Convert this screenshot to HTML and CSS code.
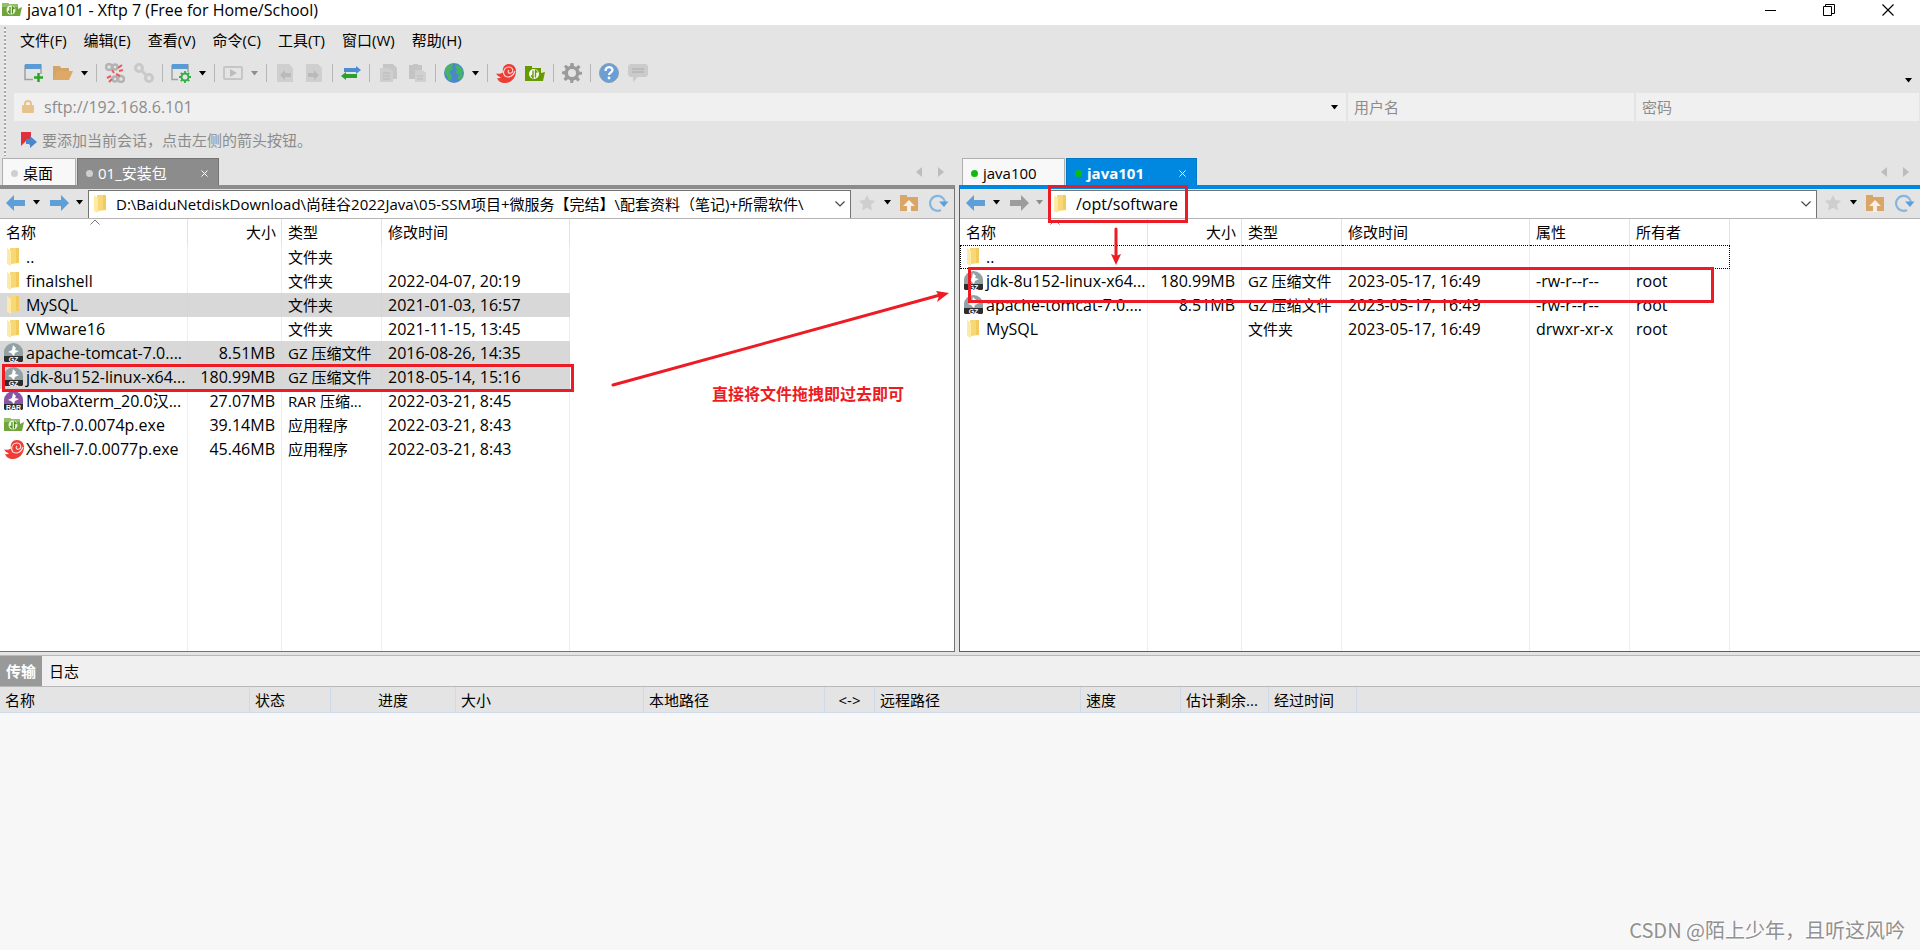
FILE: index.html
```html
<!DOCTYPE html>
<html lang="zh-CN">
<head>
<meta charset="utf-8">
<title>java101 - Xftp 7 (Free for Home/School)</title>
<link rel="stylesheet" href="styles.css">
</head>
<body>
<svg class="sprite" aria-hidden="true">
  <symbol id="xftp" viewBox="0 0 20 20"><path d="M0 3h6l1 1h9v5l4-2-2 9H0z" fill="#6fa53c"/><path d="M0 3h6l1 1h9v3H0z" fill="#93bf68"/><circle cx="9" cy="10" r="4.500" fill="#eef7e4"/><path d="M8 7v6l-2-2M10.500 13.500V7l2 2" stroke="#4d8f1c" stroke-width="1.300" fill="none"/></symbol>
  <symbol id="xftp-flat" viewBox="0 0 20 20"><path d="M0 3h7v2h9v5l4-1-2 9H0z" fill="#659a00"/><circle cx="9" cy="11" r="5" fill="#fff"/><path d="M8 7.500v7l-2-2M10.500 14.500v-7l2 2" stroke="#659a00" stroke-width="1.400" fill="none"/></symbol>
  <symbol id="xshell" viewBox="0 0 20 20"><path d="M0 10.500c2 .5 5 .5 7-1C6 4 9 1 13 1c4 0 7 3 7 7 0 7-5 12-11 12-4 0-7-2-8-5 2 .5 3 0 4-.5-2-1-4-2-5-4z" fill="#ee3d36"/><path d="M19 8c-2 6-7 7-10 5-3-3-1-9 4-9 4 0 5 5 2 6-2 1-4-1-2-3" fill="none" stroke="#fff" stroke-width="1.100" opacity=".8"/></symbol>
  <symbol id="folder" viewBox="0 0 12 18"><path d="M3 0h9v15l-8 1z" fill="#f8d775"/><path d="M9 0h3v15h-3z" fill="#f3ca60"/><path d="M0 0l4 3v15l-4-2z" fill="#ffe9a6"/></symbol>
  <symbol id="gz" viewBox="0 0 20 20"><path d="M0 14V9a9.500 9 0 0 1 19 0v5z" fill="#92a1a3"/><path d="M9 2l3 3-1 2 4 1-4 2-1 3-3-3-3-1 4-2z" fill="#fff"/><path d="M0 13h19v5l-1 1H1l-1-1z" fill="#2d2d2d"/><text x="9.500" y="18.500" class="badge">GZ</text></symbol>
  <symbol id="rar" viewBox="0 0 20 20"><path d="M0 14V9a9.500 9 0 0 1 19 0v5z" fill="#8b55a5"/><path d="M9 2l3 3-1 2 4 1-4 2-1 3-3-3-3-1 4-2z" fill="#fff"/><path d="M0 13h19v5l-1 1H1l-1-1z" fill="#2d2d2d"/><text x="9.500" y="18.500" class="badge">RAR</text></symbol>
  <symbol id="tri" viewBox="0 0 8 5"><path d="M0 0h7L3.500 4.500z" fill="currentColor"/></symbol>
  <symbol id="back" viewBox="0 0 20 16"><path d="M0 8l8-8v5h11v6H8v5z" fill="currentColor"/></symbol>
  <symbol id="fwd" viewBox="0 0 20 16"><path d="M20 8l-8-8v5H1v6h11v5z" fill="currentColor"/></symbol>
  <symbol id="star" viewBox="0 0 16 16"><path d="M8 0l2.500 5 5.500.8-4 4 1 5.700-5-2.700-5 2.700 1-5.700-4-4 5.500-.8z" fill="#cecece"/></symbol>
  <symbol id="up" viewBox="0 0 18 18"><path d="M0 1h7v2h11v14H0z" fill="#d9a668"/><path d="M9 6l6 6h-4v6H7v-6H3z" fill="#f6efe6"/></symbol>
  <symbol id="refresh" viewBox="0 0 20 18"><path d="M12 16a7.500 7.500 0 1 1 4-8" fill="none" stroke="#84b6e2" stroke-width="2.200"/><path d="M10 7.500h9.500L15 13z" fill="#5e9fd8"/></symbol>
  <symbol id="down" viewBox="0 0 10 6"><path d="M.5.5L5 5 9.500.5" fill="none" stroke="#444" stroke-width="1.200"/></symbol>
  <symbol id="sl" viewBox="0 0 6 10"><path d="M6 0v10L0 5z" fill="#bdbdbd"/></symbol>
  <symbol id="sr" viewBox="0 0 6 10"><path d="M0 0v10l6-5z" fill="#bdbdbd"/></symbol>
  <symbol id="x" viewBox="0 0 7 7"><path d="M.5.5l6 6M6.500.5l-6 6" stroke="#fff" fill="none"/></symbol>
  <symbol id="gear" viewBox="0 0 20 20"><path fill-rule="evenodd" d="M8.500 0h3l.5 3 2 1 2.500-2L18.500 4l-2 2.500 1 2 2.500.5v2.500l-3 .5-.8 2 1.800 2.500-2 2-2.500-1.800-2 .8-.5 3H8.500L8 17l-2-.8L3.500 18l-2-2 1.800-2.500-.8-2-2.500-.5V8.500L2.800 8l.9-2L2 3.500 4 1.800 6.300 3.500 8 3zM10 6a4 4 0 1 0 0 8 4 4 0 0 0 0-8z" fill="currentColor"/></symbol>
</svg>

<header class="titlebar">
  <svg class="i20"><use href="#xftp"/></svg>
  <h1>java101 - Xftp 7 (Free for Home/School)</h1>
  <div class="winbtns">
    <button aria-label="最小化"><svg width="12" height="14"><path d="M1 7.500h11" stroke="#000"/></svg></button>
    <button aria-label="还原"><svg width="12" height="14"><path d="M.5 3.500h8v9h-8zM2.500 3V1.500h9v9H9" fill="none" stroke="#000"/></svg></button>
    <button aria-label="关闭"><svg width="12" height="14"><path d="M.5 1.500l11 11M11.500 1.500l-11 11" stroke="#000" stroke-width="1.200"/></svg></button>
  </div>
</header>

<div class="chrome">
  <nav class="menu">
    <button>文件(F)</button><button>编辑(E)</button><button>查看(V)</button><button>命令(C)</button><button>工具(T)</button><button>窗口(W)</button><button>帮助(H)</button>
  </nav>
  <div class="toolbar">
    <button aria-label="新建"><svg class="i20" viewBox="0 0 20 20"><path d="M1 2h16v9M9 16.500H1V2" fill="none" stroke="#a0a0a0" stroke-width="1.500"/><path d="M1 1h16v5H1z" fill="#5b9bd5"/><path d="M14.500 10v9M10 14.500h9" stroke="#2aa52a" stroke-width="2.500"/></svg></button>
    <button aria-label="打开"><svg class="i20" viewBox="0 0 20 20"><path d="M0 3h7l1 2h8v4H6L1 17H0z" fill="#d5a468"/><path d="M5 8h15l-4 9H0z" fill="#dda965"/></svg></button>
    <button class="dd" aria-label="打开选项"><svg class="tri"><use href="#tri"/></svg></button><i class="sep"></i>
    <button aria-label="断开"><svg class="i20" viewBox="0 0 20 20"><g fill="none" stroke="#b3b3b3" stroke-width="2.500"><circle cx="4" cy="4" r="3"/><circle cx="10" cy="4" r="2.500"/><circle cx="10" cy="16" r="2.500"/><circle cx="16" cy="16" r="3"/></g><path d="M7 7l2 3M11 11l4 2M13 5l4-3M14 8l4-1M2 15l4-2M4 19l3-3" stroke="#ea5a60" stroke-width="2"/></svg></button>
    <button aria-label="重新连接"><svg class="i20" viewBox="0 0 20 20"><g fill="none" stroke="#c9c9c9" stroke-width="3"><circle cx="5" cy="5" r="3.500"/><circle cx="15" cy="15" r="3.500"/><path d="M7 7l6 6"/></g></svg></button><i class="sep"></i>
    <button aria-label="属性"><svg class="i20" viewBox="0 0 20 20"><path d="M1 2h16v7M7 16.500H1V2" fill="none" stroke="#a0a0a0" stroke-width="1.500"/><path d="M1 1h16v5H1z" fill="#5b9bd5"/><g stroke="#35ad45" fill="none"><circle cx="14" cy="14" r="3.500" stroke-width="2"/><path d="M14 8v2M14 18v2M8 14h2M18 14h2M9.800 9.800l1.500 1.500M16.700 16.700l1.500 1.500M9.800 18.200l1.500-1.500M16.700 11.300l1.500-1.500" stroke-width="1.800"/></g></svg></button>
    <button class="dd" aria-label="属性选项"><svg class="tri"><use href="#tri"/></svg></button><i class="sep"></i>
    <button aria-label="运行"><svg class="i20" viewBox="0 0 20 20"><rect x="1" y="4" width="18" height="12" rx="1" fill="none" stroke="#c6c6c6" stroke-width="2"/><path d="M7 6l7 4-7 4z" fill="#bcbcbc"/></svg></button>
    <button class="dd off" aria-label="运行选项"><svg class="tri"><use href="#tri"/></svg></button><i class="sep"></i>
    <button aria-label="下载"><svg class="i20" viewBox="0 0 20 20"><path d="M2 1h12l4 4v14H2z" fill="#cfcfcf"/><path d="M5 12l5-5v3h6v4h-6v3z" fill="#bababa"/></svg></button>
    <button aria-label="上传"><svg class="i20" viewBox="0 0 20 20"><path d="M2 1h12l4 4v14H2z" fill="#cfcfcf"/><path d="M15 12l-5-5v3H4v4h6v3z" fill="#bababa"/></svg></button><i class="sep"></i>
    <button aria-label="同步"><svg class="i20" viewBox="0 0 20 20"><path d="M20 7l-5-4v2H3v4h12v2z" fill="#4a8bd2"/><path d="M0 13l5-4v2h11v4H5v2z" fill="#2ca02c"/></svg></button><i class="sep"></i>
    <button aria-label="复制"><svg class="i20" viewBox="0 0 20 20"><path d="M5 1h10l4 4v11H5z" fill="#c6c6c6"/><path d="M2 5h9l4 3v11H2z" fill="#cecece"/><path d="M5 10h7M5 13h7M5 16h7" stroke="#b9b9b9"/></svg></button>
    <button aria-label="粘贴"><svg class="i20" viewBox="0 0 20 20"><path d="M2 2h4V1h5v1h4v14H2z" fill="#c4c4c4"/><path d="M8 7h7l4 3v9H8z" fill="#d0d0d0"/><path d="M10 13h6M10 16h6" stroke="#bdbdbd"/></svg></button><i class="sep"></i>
    <button aria-label="语言"><svg class="i20" viewBox="0 0 20 20"><circle cx="10" cy="10" r="10" fill="#4b88cb"/><path d="M1 6c2-4 5-5 8-5l-1 3 1 2-3 2v3l2 2-1 4-2 1-2-5-2-3zM12 2c4 0 6 3 7 6l-1 2 1 3-3 4-2-1 1-4-3-2 1-4-2-2z" fill="#45b562"/></svg></button>
    <button class="dd" aria-label="语言选项"><svg class="tri"><use href="#tri"/></svg></button><i class="sep"></i>
    <button aria-label="Xshell"><svg class="i20"><use href="#xshell"/></svg></button>
    <button aria-label="Xftp"><svg class="i20"><use href="#xftp-flat"/></svg></button><i class="sep"></i>
    <button class="gray" aria-label="设置"><svg class="i20"><use href="#gear"/></svg></button><i class="sep"></i>
    <button aria-label="帮助"><svg class="i20" viewBox="0 0 20 20"><circle cx="10" cy="10" r="9.500" fill="#6a9fd6" stroke="#8a9fb5"/><path d="M6.500 8c0-5 7-5 7-1 0 2.500-3.500 2.500-3.500 5" fill="none" stroke="#fff" stroke-width="2.200"/><circle cx="10" cy="15" r="1.400" fill="#fff"/></svg></button>
    <button aria-label="反馈"><svg class="i20" viewBox="0 0 20 20"><path d="M2 1h16l2 2v9l-2 2h-8l-5 5v-5H2l-2-2V3z" fill="#cbcbcb"/><path d="M4 6h12M4 9h12" stroke="#b5b5b5" stroke-width="1.300"/></svg></button>
    <button class="dd more" aria-label="更多"><svg class="tri"><use href="#tri"/></svg></button>
  </div>
  <div class="session">
    <div class="field host"><svg width="12" height="14"><path d="M3 6V4a3 3 0 0 1 6 0v2" fill="none" stroke="#e8c28c" stroke-width="2"/><rect y="5" width="12" height="8" rx="1" fill="#e8c28c"/></svg><input aria-label="主机" value="sftp://192.168.6.101"><button class="dd" aria-label="主机列表"><svg class="tri"><use href="#tri"/></svg></button></div>
    <div class="field"><input aria-label="用户名" placeholder="用户名"></div>
    <div class="field"><input aria-label="密码" type="password" placeholder="密码"></div>
  </div>
  <div class="hint"><svg width="16" height="17"><path d="M0 1h10v14l-5-5-5 5z" fill="#e0303c"/><path d="M5 8h4V5l7 6-7 6v-4H5z" fill="#4a88cc"/></svg><span>要添加当前会话，点击左侧的箭头按钮。</span></div>
</div>

<main class="panes">
  <section class="pane local">
    <div class="tabs">
      <button class="tab"><i class="dot"></i>桌面</button>
      <button class="tab active"><i class="dot"></i>01_安装包<svg class="x"><use href="#x"/></svg></button>
      <button class="scroll" aria-label="向左"><svg><use href="#sl"/></svg></button><button class="scroll" aria-label="向右"><svg><use href="#sr"/></svg></button>
    </div>
    <div class="body">
      <div class="path">
        <button class="nav" aria-label="后退"><svg class="arr"><use href="#back"/></svg></button><button class="ndd" aria-label="后退历史"><svg class="tri"><use href="#tri"/></svg></button>
        <button class="nav second" aria-label="前进"><svg class="arr"><use href="#fwd"/></svg></button><button class="ndd" aria-label="前进历史"><svg class="tri"><use href="#tri"/></svg></button>
        <div class="combo"><svg class="fold"><use href="#folder"/></svg><input aria-label="本地路径" value="D:\BaiduNetdiskDownload\尚硅谷2022Java\05-SSM项目+微服务【完结】\配套资料（笔记)+所需软件\"><button aria-label="展开"><svg width="10" height="6"><use href="#down"/></svg></button></div>
        <button class="nav" aria-label="收藏"><svg width="16" height="16"><use href="#star"/></svg></button><button class="ndd" aria-label="收藏列表"><svg class="tri"><use href="#tri"/></svg></button><button class="nav" aria-label="上级"><svg width="18" height="18"><use href="#up"/></svg></button><button class="nav" aria-label="刷新"><svg width="20" height="18"><use href="#refresh"/></svg></button>
      </div>
      <div class="list">
        <table>
          <colgroup><col class="c-name"><col class="c-size"><col class="c-type"><col class="c-date"><col></colgroup>
          <thead><tr><th>名称<svg class="sort" width="10" height="6"><path d="M.5 5.500L5 1l4.500 4.500" fill="none" stroke="#777"/></svg></th><th class="num">大小</th><th>类型</th><th>修改时间</th><th></th></tr></thead>
          <tbody>
            <tr><td><svg class="fold"><use href="#folder"/></svg>..</td><td></td><td>文件夹</td><td></td><td></td></tr>
            <tr><td><svg class="fold"><use href="#folder"/></svg>finalshell</td><td></td><td>文件夹</td><td class="date">2022-04-07, 20:19</td><td></td></tr>
            <tr class="sel"><td><svg class="fold"><use href="#folder"/></svg>MySQL</td><td></td><td>文件夹</td><td class="date">2021-01-03, 16:57</td><td></td></tr>
            <tr><td><svg class="fold"><use href="#folder"/></svg>VMware16</td><td></td><td>文件夹</td><td class="date">2021-11-15, 13:45</td><td></td></tr>
            <tr class="sel"><td><svg class="file"><use href="#gz"/></svg>apache-tomcat-7.0....</td><td class="num">8.51MB</td><td>GZ 压缩文件</td><td class="date">2016-08-26, 14:35</td><td></td></tr>
            <tr class="sel"><td><svg class="file"><use href="#gz"/></svg>jdk-8u152-linux-x64...</td><td class="num">180.99MB</td><td>GZ 压缩文件</td><td class="date">2018-05-14, 15:16</td><td></td></tr>
            <tr><td><svg class="file"><use href="#rar"/></svg>MobaXterm_20.0汉...</td><td class="num">27.07MB</td><td>RAR 压缩...</td><td class="date">2022-03-21, 8:45</td><td></td></tr>
            <tr><td><svg class="file"><use href="#xftp"/></svg>Xftp-7.0.0074p.exe</td><td class="num">39.14MB</td><td>应用程序</td><td class="date">2022-03-21, 8:43</td><td></td></tr>
            <tr><td><svg class="file"><use href="#xshell"/></svg>Xshell-7.0.0077p.exe</td><td class="num">45.46MB</td><td>应用程序</td><td class="date">2022-03-21, 8:43</td><td></td></tr>
            <tr class="fill"><td></td><td></td><td></td><td></td><td></td></tr>
          </tbody>
        </table>
      </div>
    </div>
  </section>

  <section class="pane remote">
    <div class="tabs">
      <button class="tab"><i class="dot"></i>java100</button>
      <button class="tab active"><i class="dot"></i>java101<svg class="x"><use href="#x"/></svg></button>
      <button class="scroll" aria-label="向左"><svg><use href="#sl"/></svg></button><button class="scroll" aria-label="向右"><svg><use href="#sr"/></svg></button>
    </div>
    <div class="body">
      <div class="path">
        <button class="nav" aria-label="后退"><svg class="arr"><use href="#back"/></svg></button><button class="ndd" aria-label="后退历史"><svg class="tri"><use href="#tri"/></svg></button>
        <button class="nav second off" aria-label="前进"><svg class="arr"><use href="#fwd"/></svg></button><button class="ndd off" aria-label="前进历史"><svg class="tri"><use href="#tri"/></svg></button>
        <div class="combo"><svg class="fold"><use href="#folder"/></svg><input aria-label="远程路径" value="/opt/software"><button aria-label="展开"><svg width="10" height="6"><use href="#down"/></svg></button></div>
        <button class="nav" aria-label="收藏"><svg width="16" height="16"><use href="#star"/></svg></button><button class="ndd" aria-label="收藏列表"><svg class="tri"><use href="#tri"/></svg></button><button class="nav" aria-label="上级"><svg width="18" height="18"><use href="#up"/></svg></button><button class="nav" aria-label="刷新"><svg width="20" height="18"><use href="#refresh"/></svg></button>
      </div>
      <div class="list">
        <table>
          <colgroup><col class="c-name"><col class="c-size"><col class="c-type"><col class="c-date"><col class="c-attr"><col class="c-attr"><col></colgroup>
          <thead><tr><th>名称<svg class="sort" width="10" height="6"><path d="M.5 5.500L5 1l4.500 4.500" fill="none" stroke="#777"/></svg></th><th class="num">大小</th><th>类型</th><th>修改时间</th><th>属性</th><th>所有者</th><th></th></tr></thead>
          <tbody>
            <tr class="focus"><td><svg class="fold"><use href="#folder"/></svg>..</td><td></td><td></td><td></td><td></td><td></td><td></td></tr>
            <tr><td><svg class="file"><use href="#gz"/></svg>jdk-8u152-linux-x64...</td><td class="num">180.99MB</td><td>GZ 压缩文件</td><td class="date">2023-05-17, 16:49</td><td class="date">-rw-r--r--</td><td class="date">root</td><td></td></tr>
            <tr><td><svg class="file"><use href="#gz"/></svg>apache-tomcat-7.0....</td><td class="num">8.51MB</td><td>GZ 压缩文件</td><td class="date">2023-05-17, 16:49</td><td class="date">-rw-r--r--</td><td class="date">root</td><td></td></tr>
            <tr><td><svg class="fold"><use href="#folder"/></svg>MySQL</td><td></td><td>文件夹</td><td class="date">2023-05-17, 16:49</td><td class="date">drwxr-xr-x</td><td class="date">root</td><td></td></tr>
            <tr class="fill"><td></td><td></td><td></td><td></td><td></td><td></td><td></td></tr>
          </tbody>
        </table>
      </div>
    </div>
  </section>
</main>

<section class="transfer">
  <div class="ttabs"><button class="on">传输</button><button>日志</button></div>
  <table>
    <colgroup><col class="t1"><col class="t2"><col class="t3"><col class="t4"><col class="t5"><col class="t6"><col class="t7"><col class="t8"><col class="t9"><col class="t9"><col></colgroup>
    <thead><tr><th>名称</th><th>状态</th><th class="mid">进度</th><th>大小</th><th>本地路径</th><th class="mid">&lt;-&gt;</th><th>远程路径</th><th>速度</th><th>估计剩余...</th><th>经过时间</th><th></th></tr></thead>
  </table>
</section>

<div class="mark box-local"></div>
<div class="mark box-path"></div>
<div class="mark box-remote"></div>
<svg class="drag" width="340" height="100"><path d="M4 95L331 5" stroke="#ed1c24" stroke-width="3" stroke-linecap="round"/><path d="M340 3l-12 9 2-6-3-5z" fill="#ed1c24"/></svg>
<svg class="point" width="12" height="38"><path d="M6 2v28" stroke="#ed1c24" stroke-width="3" stroke-linecap="round"/><path d="M6 38L1 27l5 2 5-2z" fill="#ed1c24"/></svg>
<p class="note">直接将文件拖拽即过去即可</p>
<p class="watermark">CSDN @陌上少年<span class="comma">，</span>且听这风吟</p>
</body>
</html>
```

FILE: styles.css
```css
* { box-sizing: border-box; }
body {
  margin: 0;
  min-height: 100vh;
  display: flex;
  flex-direction: column;
  position: relative;
  background: #e4e4e4;
  color: #000;
  font: 15px/20px "Open Sans", "Noto Sans CJK SC", sans-serif;
}
button, input { font: inherit; color: inherit; border: 0; padding: 0; margin: 0; background: none; min-width: 0; outline: 0; }
button { display: flex; align-items: center; justify-content: center; white-space: nowrap; }
svg { display: block; flex: none; }
h1, p { margin: 0; font-weight: 400; font-size: 16px; }
.sprite { display: none; }
.badge { font: bold 7px "Liberation Sans", sans-serif; fill: #fff; text-anchor: middle; }
.i20 { width: 20px; height: 20px; }
.tri { width: 8px; height: 5px; }
.off { color: #8c8c8c; }
.gray { color: #9b9b9b; }

.titlebar { height: 25px; background: #fff; display: flex; align-items: center; padding: 0 3px 5px 2px; gap: 5px; }
.winbtns { margin-left: auto; display: flex; }
.winbtns button { width: 59px; height: 20px; }

.chrome { height: 133px; padding-left: 14px; display: flex; flex-direction: column; position: relative; }
.chrome::before {
  content: ""; position: absolute; left: 4px; top: 2px; bottom: 2px; width: 2px;
  background: repeating-linear-gradient(#a5a5a5 0 2px, #f4f4f4 2px 4px);
}
.menu { display: flex; gap: 17px; height: 32px; padding: 0 0 2px 6px; }
.toolbar { display: flex; align-items: center; height: 36px; padding: 0 4px 4px 5px; }
.toolbar button { width: 29px; height: 24px; }
.toolbar button.dd, .host button.dd { width: 15px; }
.sep { width: 8px; height: 18px; background: linear-gradient(#b5b5b5, #b5b5b5) center / 1px 100% no-repeat; }
.toolbar .more { margin-left: auto; width: 8px; align-self: flex-end; height: 18px; }
.session { display: grid; grid-template-columns: 1332fr 286fr 283fr; gap: 2px; height: 28px; padding-right: 1px; color: #8c8c8c; }
.field { background: #f0f0f0; display: flex; align-items: center; padding-left: 6px; }
.field input { flex: 1; }
.field input::placeholder { color: #8c8c8c; }
.host { padding: 0 4px 0 8px; gap: 10px; font-size: 16px; }
.host button { color: #000; }
.hint { display: flex; align-items: center; gap: 5px; height: 37px; padding: 0 0 0 7px; color: #8c8c8c; }

.panes { flex: 495 1 0; display: grid; grid-template-columns: 955fr 961fr; gap: 4px; min-height: 0; }
.pane { display: flex; flex-direction: column; min-height: 0; min-width: 0; }
.local { --accent: #8c8c8c; --edge: #747474; --dot: #cfcfcf; }
.remote { --accent: #0087e0; --edge: #0078c6; --dot: #0dbb0d; }
.tabs { display: flex; height: 27px; padding-left: 2px; gap: 1px; }
.tab { justify-content: flex-start; gap: 4px; padding: 2px 16px 0 8px; background: #f8f8f8; border: 1px solid #b0b0b0; border-bottom: 0; min-width: 74px; }
.remote .tab { min-width: 103px; }
.tab.active { background: var(--accent); color: #fff; border-color: var(--edge); width: 142px; }
.remote .tab.active { width: 131px; font-weight: 700; }
.remote .tabs { padding-left: 3px; }
.dot { width: 7px; height: 7px; border-radius: 50%; background: var(--dot); margin-right: 1px; }
.x { width: 7px; height: 7px; margin-left: auto; margin-right: -6px; }
.scroll { width: 21px; }
.scroll svg { width: 6px; height: 10px; }
.tab + .scroll { margin-left: auto; }
.scroll:last-child { margin-right: 4px; }
.body { flex: 1; display: flex; flex-direction: column; min-height: 0; border-top: 4px solid var(--accent); border-bottom: 1px solid var(--edge); }
.local .body { border-right: 1px solid var(--edge); }
.remote .body { border-left: 1px solid var(--edge); }
.path { display: flex; height: 30px; padding-top: 1px; border-bottom: 1px solid #b4b4b4; }
.nav { width: 31px; color: #5e9fd8; padding-bottom: 3px; }
.nav.second { margin-left: 1px; }
.nav:last-child { width: 30px; }
.nav.off { color: #9d9d9d; }
.arr { width: 20px; height: 16px; }
.ndd { width: 11px; padding-bottom: 3px; }
.combo { flex: 1; min-width: 0; display: flex; align-items: center; background: #fff; border: 1px solid #747474; border-bottom: 0; margin-left: 3px; padding: 0 0 1px 5px; gap: 10px; }
.combo input { flex: 1; text-overflow: clip; }
.remote .combo { font-size: 16px; }
.combo button { width: 16px; height: 100%; margin-right: 2px; margin-left: -8px; }
.fold { width: 12px; height: 18px; }
.list { flex: 1; min-height: 0; background: #fff; }
table { border-collapse: separate; border-spacing: 0; table-layout: fixed; width: 100%; }
.list table { height: 100%; }
th, td { font-weight: 400; text-align: left; padding: 0 0 0 6px; white-space: nowrap; overflow: hidden; }
th { height: 26px; border-right: 1px solid #e3e3e3; position: relative; }
td { height: 24px; border-right: 1px solid #e6f0fa; }
.list th:last-child, .list td:last-child { border-right: 0; }
.list .fill td { height: auto; }
.list td:first-child, .list td.num, .list td.date { font-size: 16px; }
.num { text-align: right; padding-right: 6px; }
th.num { padding-right: 5px; }
.sel td { background: #d8d8d8; border-right-color: #ccd7e2; }
.sel td:last-child { background: none; }
td svg { display: inline-block; vertical-align: top; }
td .fold { margin: 1px 7px 0 1px; }
td .file { width: 20px; height: 20px; margin: 0 2px 0 -2px; }
.sort { position: absolute; left: 90px; top: 0; }
.focus td { border-top: 1px dotted #000; border-bottom: 1px dotted #000; }
.focus td:first-child { border-left: 1px dotted #000; padding-left: 5px; }
.focus td:nth-last-child(2) { border-right: 1px dotted #000; }
.focus td:last-child { border: 0; }
.c-name, .c-date { width: 188px; }
.c-size { width: 94px; }
.c-type, .c-attr { width: 100px; }

.transfer { flex: 294 1 0; margin-top: 3px; border-top: 1px solid #b8b8b8; background: #f7f7f7; }
.ttabs { display: flex; height: 31px; background: #f0f0f0; border-bottom: 1px solid #b8b8b8; }
.ttabs button { padding: 0 7px; }
.ttabs .on { background: #999; color: #fff; font-weight: 700; padding: 0 6px; }
.transfer th { background: #e4e4e4; border-right: 1px solid #ced9ea; border-bottom: 1px solid #ced9ea; padding-left: 5px; }
.transfer th:last-child { border-right: 0; }
.transfer .mid { text-align: center; padding: 0; }
.t1 { width: 250px; }
.t2 { width: 81px; }
.t3 { width: 125px; }
.t4 { width: 188px; }
.t5 { width: 181px; }
.t6 { width: 50px; }
.t7 { width: 206px; }
.t8 { width: 100px; }
.t9 { width: 88px; }

.mark { position: absolute; border: 3px solid #ed1c24; }
.box-local { left: 2px; top: 364px; width: 572px; height: 28px; }
.box-path { left: 1048px; top: 185px; width: 140px; height: 38px; }
.box-remote { left: 968px; top: 267px; width: 746px; height: 36px; }
.drag, .point, .note, .watermark { position: absolute; }
.drag { left: 609px; top: 290px; }
.point { left: 1110px; top: 227px; }
.note { left: 712px; top: 384px; color: #ed1c24; font-weight: 700; }
.watermark { right: 15px; bottom: 8px; font: 20px/24px "Noto Sans CJK SC", sans-serif; color: #919191; text-shadow: -1px -1px 0 #fff; }
.comma { font-family: "Noto Sans CJK TC", sans-serif; }
```
